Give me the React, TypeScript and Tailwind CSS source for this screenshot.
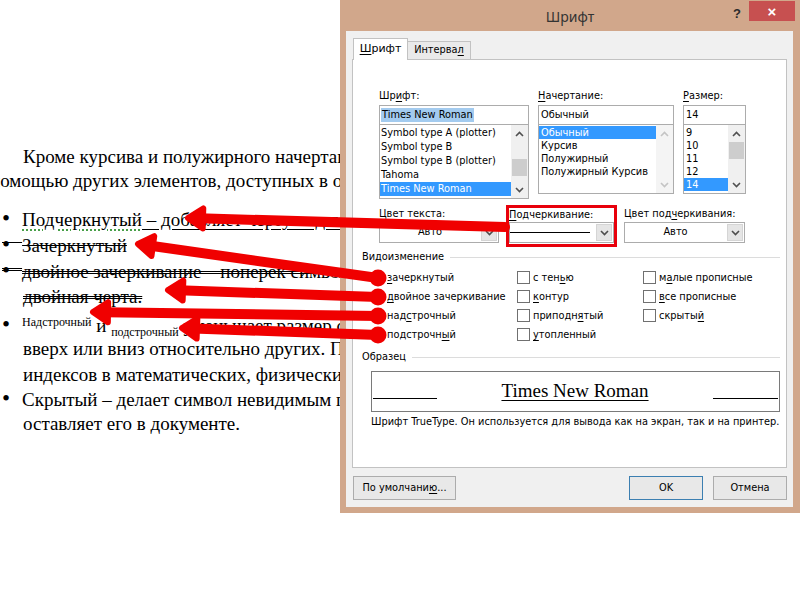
import React from "react";

const RED = "#f00000";

function Arrow({ x1, y1, x2, y2, circle = false }: { x1: number; y1: number; x2: number; y2: number; circle?: boolean }) {
  const dx = x2 - x1;
  const dy = y2 - y1;
  const len = Math.hypot(dx, dy);
  const ux = dx / len;
  const uy = dy / len;
  const bx = x2 - ux * 15;
  const by = y2 - uy * 15;
  const px = -uy;
  const py = ux;
  const pts = `${x2},${y2} ${bx + px * 10},${by + py * 10} ${bx - px * 10},${by - py * 10}`;
  return (
    <g>
      <line x1={x1} y1={y1} x2={bx + ux * 4} y2={by + uy * 4} stroke={RED} strokeWidth={10} strokeLinecap="round" />
      <polygon points={pts} fill={RED} stroke={RED} strokeWidth={6} strokeLinejoin="round" />
      {circle && <circle cx={x1} cy={y1} r={8.5} fill={RED} />}
    </g>
  );
}

function Chev({ dir, color }: { dir: "up" | "down"; color: string }) {
  return (
    <svg width="9" height="6" viewBox="0 0 9 6">
      <polyline
        points={dir === "up" ? "1,5 4.5,1.5 8,5" : "1,1 4.5,4.5 8,1"}
        fill="none"
        stroke={color}
        strokeWidth="1.6"
      />
    </svg>
  );
}

function Combo({ cls, children }: { cls: string; children: React.ReactNode }) {
  return (
    <div className={"flex h-[21px] border border-[#acacac] bg-white " + cls}>
      <div className="flex-1 flex items-center justify-center">{children}</div>
      <div className="w-[16px] m-[1px] bg-[#e5e5e5] border border-[#d5d5d5] flex items-center justify-center">
        <Chev dir="down" color="#4d4d4d" />
      </div>
    </div>
  );
}

function Box() {
  return <span className="w-[13px] h-[13px] border border-[#707070] bg-white shrink-0" />;
}

function Check({ children, hidden = false }: { children: React.ReactNode; hidden?: boolean }) {
  return (
    <div className="flex items-center gap-[3px]">
      {hidden ? <span className="w-[13px] h-[13px] shrink-0" /> : <Box />}
      <span className="leading-[13px]">{children}</span>
    </div>
  );
}

function U({ children }: { children: React.ReactNode }) {
  return <span className="underline underline-offset-[2px]">{children}</span>;
}

function Bullet() {
  return <span className="text-[23px] tracking-[12px]">•</span>;
}

export default function App() {
  return (
    <div className="relative w-[800px] h-[600px] bg-white overflow-hidden flex">
      {/* Document */}
      <div className="w-[340px] shrink-0 overflow-hidden font-['Liberation_Serif',serif] text-[19px] text-black whitespace-nowrap pt-[145px]">
        <div className="h-[24px] leading-[24px] pl-[23px]">Кроме курсива и полужирного начертания, текст можно</div>
        <div className="h-[24px] leading-[24px] -ml-[10px]">помощью других элементов, доступных в окне «Шрифт»:</div>
        <div className="h-[13px]" />
        <div className="h-[26px] leading-[26px] pl-[2px]">
          <Bullet />
          <span className="underline decoration-dotted decoration-[#3f9b3f] underline-offset-[4px]">Подчеркнутый</span>
          <span className="underline underline-offset-[3px]"> – добавляет черту под текстом.</span>
        </div>
        <div className="h-[26px] leading-[26px] pl-[2px] line-through">
          <Bullet />Зачеркнутый
        </div>
        <div className="h-[26px] leading-[26px] pl-[2px] line-through decoration-double">
          <Bullet />двойное зачеркивание – поперек символа проходит
        </div>
        <div className="h-[25px] leading-[25px] pl-[23px] line-through decoration-double">двойная черта.</div>
        <div className="h-[26px] leading-[26px] pl-[2px]">
          <Bullet />
          <span className="text-[12px] align-[6px]">Надстрочный</span> и{" "}
          <span className="text-[12px] align-[-4px]">подстрочный</span> уменьшает размер символа и смещает его
        </div>
        <div className="h-[28px] leading-[28px] pl-[23px]">вверх или вниз относительно других. Подходит для</div>
        <div className="h-[24px] leading-[24px] pl-[23px]">индексов в математических, физических формулах.</div>
        <div className="h-[24px] leading-[24px] pl-[2px]">
          <Bullet />Скрытый – делает символ невидимым при печати, но
        </div>
        <div className="h-[25px] leading-[25px] pl-[23px]">оставляет его в документе.</div>
      </div>

      {/* Dialog */}
      <div className="w-[460px] h-[513px] shrink-0 bg-[#d1a78b] flex flex-col font-['DejaVu_Sans',sans-serif] text-[9.8px] text-black">
        {/* Title bar */}
        <div className="h-[31px] grid grid-cols-[1fr_auto_1fr] items-center">
          <div />
          <div className="font-['Noto_Sans',sans-serif] text-[14px] text-[#333] pt-[2px]">Шрифт</div>
          <div className="flex justify-end items-start self-start h-full">
            <span className="mt-[4px] mr-[8px] font-['Liberation_Sans',sans-serif] font-bold text-[13px] text-[#2b2b2b]">?</span>
            <div className="mt-[1px] mr-[5px] w-[46px] h-[20px] bg-[#c75050] flex items-center justify-center text-white font-['Liberation_Sans',sans-serif] font-bold text-[15px] leading-none">
              ×
            </div>
          </div>
        </div>

        {/* Body */}
        <div className="ml-[6px] w-[447px] h-[476px] bg-[#f0f0f0] px-[6px] pt-[7px] flex flex-col">
          {/* Tabs */}
          <div className="flex items-end h-[21px] pl-[1px]">
            <div className="relative z-10 h-[22px] w-[55px] -mb-[1px] bg-white border border-b-0 border-[#c2c2c2] flex items-center justify-center text-[11px]">
              <span>
                <U>Ш</U>рифт
              </span>
            </div>
            <div className="h-[18px] w-[63px] bg-[#eaeaea] border border-b-0 border-l-0 border-[#c2c2c2] flex items-center justify-center">
              <span>
                Интерва<U>л</U>
              </span>
            </div>
          </div>

          {/* Tab page */}
          <div className="w-[435px] h-[409px] bg-white border border-[#c2c2c2] flex flex-col pt-[29px]">
            {/* Font row */}
            <div className="flex pl-[26px] items-start">
              {/* Font */}
              <div className="w-[150px] flex flex-col">
                <div className="h-[14px] leading-[14px]">
                  Шр<U>и</U>фт:
                </div>
                <div className="mt-[2px] h-[20px] border border-[#acacac] flex items-center pl-[1px]">
                  <span className="bg-[#a3cbef] px-[1px] leading-[14px]">Times New Roman</span>
                </div>
                <div className="h-[74px] border border-t-0 border-[#acacac] flex">
                  <div className="flex-1 flex flex-col pt-[1px]">
                    {["Symbol type A (plotter)", "Symbol type B", "Symbol type B (plotter)", "Tahoma"].map((t) => (
                      <div key={t} className="h-[14px] leading-[14px] pl-[1px]">
                        {t}
                      </div>
                    ))}
                    <div className="h-[14px] leading-[14px] pl-[1px] bg-[#3399ff] text-white">Times New Roman</div>
                  </div>
                  <div className="w-[17px] bg-[#f0f0f0] flex flex-col items-center">
                    <div className="h-[17px] flex items-center justify-center">
                      <Chev dir="up" color="#505050" />
                    </div>
                    <div className="h-[17px] w-[15px] mt-[17px] bg-[#cdcdcd]" />
                    <div className="flex-1" />
                    <div className="h-[17px] flex items-center justify-center">
                      <Chev dir="down" color="#505050" />
                    </div>
                  </div>
                </div>
              </div>
              {/* Style */}
              <div className="w-[136px] ml-[9px] flex flex-col">
                <div className="h-[14px] leading-[14px]">
                  <U>Н</U>ачертание:
                </div>
                <div className="mt-[2px] h-[20px] border border-[#acacac] flex items-center pl-[2px]">Обычный</div>
                <div className="h-[69px] border border-t-0 border-[#acacac] flex">
                  <div className="flex-1 flex flex-col pt-[1px]">
                    <div className="h-[13px] leading-[13px] pl-[2px] bg-[#3399ff] text-white">Обычный</div>
                    {["Курсив", "Полужирный", "Полужирный Курсив"].map((t) => (
                      <div key={t} className="h-[13px] leading-[13px] pl-[2px]">
                        {t}
                      </div>
                    ))}
                  </div>
                  <div className="w-[17px] bg-[#f4f4f4] flex flex-col items-center justify-between">
                    <div className="h-[17px] flex items-center justify-center">
                      <Chev dir="up" color="#c4c4c4" />
                    </div>
                    <div className="h-[17px] flex items-center justify-center">
                      <Chev dir="down" color="#c4c4c4" />
                    </div>
                  </div>
                </div>
              </div>
              {/* Size */}
              <div className="w-[63px] ml-[9px] flex flex-col">
                <div className="h-[14px] leading-[14px]">
                  <U>Р</U>азмер:
                </div>
                <div className="mt-[2px] h-[20px] border border-[#acacac] flex items-center pl-[2px]">14</div>
                <div className="h-[69px] border border-t-0 border-[#acacac] flex">
                  <div className="flex-1 flex flex-col pt-[1px]">
                    {["9", "10", "11", "12"].map((t) => (
                      <div key={t} className="h-[13px] leading-[13px] pl-[2px]">
                        {t}
                      </div>
                    ))}
                    <div className="h-[13px] leading-[13px] pl-[2px] bg-[#3399ff] text-white">14</div>
                  </div>
                  <div className="w-[17px] bg-[#f0f0f0] flex flex-col items-center">
                    <div className="h-[17px] flex items-center justify-center">
                      <Chev dir="up" color="#505050" />
                    </div>
                    <div className="h-[17px] w-[15px] bg-[#cdcdcd]" />
                    <div className="flex-1" />
                    <div className="h-[16px] flex items-center justify-center">
                      <Chev dir="down" color="#505050" />
                    </div>
                  </div>
                </div>
              </div>
            </div>

            {/* Color row */}
            <div className="flex pl-[26px] mt-[6px] items-start">
              <div className="w-[120px] mt-[2px] flex flex-col">
                <div className="h-[14px] leading-[14px]">Цвет текста:</div>
                <Combo cls="w-[120px] mt-[1px]">Авто</Combo>
              </div>
              <div className="w-[111px] h-[42px] ml-[7px] border-[3px] border-[#e8000b] flex flex-col">
                <div className="h-[14px] leading-[14px]">
                  <U>П</U>одчеркивание:
                </div>
                <Combo cls="w-[105px]">
                  <span className="block w-[80px] h-px bg-black -ml-[6px]" />
                </Combo>
              </div>
              <div className="w-[121px] ml-[7px] mt-[2px] flex flex-col">
                <div className="h-[14px] leading-[14px]">
                  Цвет под<U>ч</U>еркивания:
                </div>
                <Combo cls="w-[121px] mt-[1px]">Авто</Combo>
              </div>
            </div>

            {/* Effects */}
            <div className="mt-[3px] h-[14px] flex items-center pl-[9px] pr-[6px] gap-[6px]">
              <span>Видоизменение</span>
              <span className="flex-1 h-px bg-[#dcdcdc]" />
            </div>
            <div className="mt-[4px] flex flex-col pl-[18px]">
              <div className="h-[19px] flex items-center">
                <div className="w-[146px]">
                  <Check hidden>
                    <U>з</U>ачеркнутый
                  </Check>
                </div>
                <div className="w-[126px]">
                  <Check>
                    с тен<U>ь</U>ю
                  </Check>
                </div>
                <Check>
                  м<U>а</U>лые прописные
                </Check>
              </div>
              <div className="h-[19px] flex items-center">
                <div className="w-[146px]">
                  <Check hidden>
                    <U>д</U>войное зачеркивание
                  </Check>
                </div>
                <div className="w-[126px]">
                  <Check>
                    <U>к</U>онтур
                  </Check>
                </div>
                <Check>
                  <U>в</U>се прописные
                </Check>
              </div>
              <div className="h-[19px] flex items-center">
                <div className="w-[146px]">
                  <Check hidden>
                    над<U>с</U>трочный
                  </Check>
                </div>
                <div className="w-[126px]">
                  <Check>
                    приподн<U>я</U>тый
                  </Check>
                </div>
                <Check>
                  скрыты<U>й</U>
                </Check>
              </div>
              <div className="h-[19px] flex items-center">
                <div className="w-[146px]">
                  <Check hidden>
                    подстрочн<U>ы</U>й
                  </Check>
                </div>
                <div className="w-[126px]">
                  <Check>
                    <U>у</U>топленный
                  </Check>
                </div>
              </div>
            </div>

            {/* Sample */}
            <div className="mt-[6px] h-[14px] flex items-center pl-[9px] pr-[6px] gap-[6px]">
              <span>Образец</span>
              <span className="flex-1 h-px bg-[#dcdcdc]" />
            </div>
            <div className="mt-[7px] ml-[18px] w-[409px] h-[41px] border border-[#7a7a7a] bg-white flex items-center justify-between px-[1px]">
              <span className="w-[64px] h-px bg-black mt-[13px]" />
              <span className="font-['Liberation_Serif',serif] text-[19px] underline underline-offset-[3px] decoration-1">Times New Roman</span>
              <span className="w-[65px] h-px bg-black mt-[13px]" />
            </div>
            <div className="mt-[3px] h-[14px] leading-[14px] pl-[18px] whitespace-nowrap">
              Шрифт TrueType. Он используется для вывода как на экран, так и на принтер.
            </div>
          </div>

          {/* Buttons */}
          <div className="mt-[8px] flex pl-[1px]">
            <div className="w-[103px] h-[24px] border border-[#acacac] bg-[#e8e8e8] flex items-center justify-center">
              <span>
                По умолчани<U>ю</U>...
              </span>
            </div>
            <div className="flex-1" />
            <div className="w-[74px] h-[24px] border border-[#3c7fb1] bg-[#e8e8e8] flex items-center justify-center">OK</div>
            <div className="w-[74px] h-[24px] ml-[10px] border border-[#acacac] bg-[#e8e8e8] flex items-center justify-center">
              Отмена
            </div>
          </div>
        </div>
      </div>

      {/* Annotation arrows */}
      <svg className="absolute inset-0 pointer-events-none" width="800" height="600" viewBox="0 0 800 600">
        <Arrow x1={505} y1={227} x2={188} y2={218} />
        <Arrow x1={378} y1={278} x2={138} y2={244} circle />
        <Arrow x1={378} y1={297} x2={168} y2={290} circle />
        <Arrow x1={378} y1={316} x2={93} y2={312} circle />
        <Arrow x1={378} y1={335} x2={182} y2={328} circle />
      </svg>
    </div>
  );
}
